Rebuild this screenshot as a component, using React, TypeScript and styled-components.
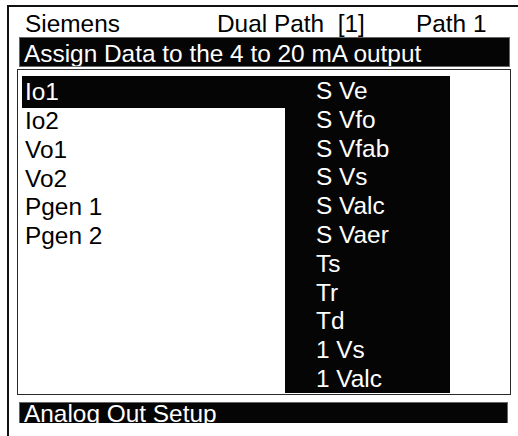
import styled, { createGlobalStyle } from "styled-components";

const Global = createGlobalStyle`
  html, body {
    margin: 0;
    padding: 0;
    background: #fff;
  }
  body {
    font-family: "Liberation Sans", Arial, sans-serif;
    color: #000;
    overflow: hidden;
  }
`;

const Screen = styled.div`
  margin: 5px 0 0 7px;
  width: 511px;
  height: 431px;
  border-left: 2px solid #111;
  border-top: 2px solid #111;
  box-sizing: border-box;
  font-size: 24.4px;
`;

const Header = styled.div`
  display: grid;
  grid-template-columns: 192px 199px auto;
  height: 30px;
  line-height: 33px;
  padding-left: 16px;
  white-space: pre;
  overflow: hidden;
`;

const Bar = styled.div<{ $h: number }>`
  margin-left: 10px;
  height: ${({ $h }) => $h}px;
  background: #050505;
  color: #fff;
  padding-left: 4px;
  box-sizing: border-box;
  border: 1px solid #666;
  overflow: hidden;
  white-space: nowrap;
`;

const TitleBar = styled(Bar)`
  width: 491px;
  line-height: 31px;
`;

const StatusBar = styled(Bar)`
  width: 489px;
  margin-top: 7px;
  line-height: 21px;
  border-bottom: none;
`;

const ListBox = styled.div`
  position: relative;
  margin: 2px 0 0 8px;
  width: 494px;
  height: 326px;
  border: 1px solid #2a2a2a;
  box-sizing: border-box;
  padding-top: 8px;
`;

const Rows = styled.div`
  display: flex;
  flex-direction: column;
`;

const Row = styled.div<{ $active?: boolean }>`
  height: 28.8px;
  line-height: 28.8px;
  padding-left: 3px;
  margin-left: 4px;
  width: 290px;
  box-sizing: border-box;
  ${({ $active }) =>
    $active &&
    `
    background: #050505;
    color: #fff;
    height: 32px;
    padding-top: 2px;
    margin: -2px 0 -1px 4px;
  `}
`;

const Dropdown = styled.div`
  position: absolute;
  left: 267px;
  top: 6px;
  width: 165px;
  height: 317px;
  background: #050505;
  color: #fff;
  padding-left: 31px;
  padding-top: 1px;
  box-sizing: border-box;
  display: flex;
  flex-direction: column;
`;

const Option = styled.div`
  height: 28.8px;
  line-height: 28.8px;
`;

const outputs = ["Io1", "Io2", "Vo1", "Vo2", "Pgen 1", "Pgen 2"];
const sources = [
  "S Ve",
  "S Vfo",
  "S Vfab",
  "S Vs",
  "S Valc",
  "S Vaer",
  "Ts",
  "Tr",
  "Td",
  "1 Vs",
  "1 Valc",
];

export default function App() {
  return (
    <>
      <Global />
      <Screen>
        <Header>
          <span>Siemens</span>
          <span>Dual Path  [1]</span>
          <span>Path 1</span>
        </Header>
        <TitleBar $h={30}>Assign Data to the 4 to 20 mA output</TitleBar>
        <ListBox>
          <Rows>
            {outputs.map((o, i) => (
              <Row key={o} $active={i === 0}>
                {o}
              </Row>
            ))}
          </Rows>
          <Dropdown>
            {sources.map((s) => (
              <Option key={s}>{s}</Option>
            ))}
          </Dropdown>
        </ListBox>
        <StatusBar $h={21}>Analog Out Setup</StatusBar>
      </Screen>
    </>
  );
}
